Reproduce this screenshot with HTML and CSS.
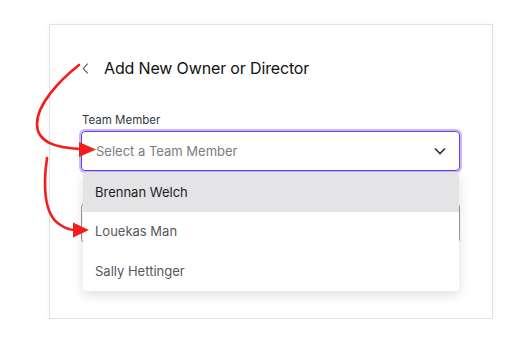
FILE: index.html
```html
<!DOCTYPE html>
<html lang="en">
<head>
  <meta charset="UTF-8">
  <meta name="viewport" content="width=device-width, initial-scale=1.0">
  <title>Add New Owner or Director</title>
  <link rel="stylesheet" href="styles.css">
</head>
<body>

  <div class="card">
    <div class="card-header">
      <button class="back-btn" type="button" aria-label="Back">
        <svg width="8" height="13" viewBox="0 0 8 13"><path d="M6.5 1 L1.5 6.5 L6.5 12" fill="none" stroke="#555" stroke-width="1.2"/></svg>
      </button>
      <h1>Add New Owner or Director</h1>
    </div>

    <div class="field">
      <label class="field-label">Team Member</label>
      <div class="select select-open">
        <span class="placeholder">Select a Team Member</span>
        <svg class="caret" width="12" height="8" viewBox="0 0 12 8"><path d="M1 1.5 L6 6.5 L11 1.5" fill="none" stroke="#333" stroke-width="1.6"/></svg>
      </div>
      <ul class="dropdown">
        <li class="option option-active">Brennan Welch</li>
        <li class="option">Louekas Man</li>
        <li class="option">Sally Hettinger</li>
      </ul>
    </div>

    <div class="select select-behind"></div>
  </div>

  <!-- annotation arrows -->
  <svg class="annotations" width="532" height="339" viewBox="0 0 532 339">
    <path d="M79 65 C60 80 37 104 37 124 C37 142 55 148 81 149" fill="none" stroke="#f21d1d" stroke-width="2.6" stroke-linecap="round"/>
    <polygon points="79,142 96,149.5 79,157" fill="#f21d1d"/>
    <path d="M47 158 C43 185 44 214 59 224 C66 229 71 230 75 230" fill="none" stroke="#f21d1d" stroke-width="2.6" stroke-linecap="round"/>
    <polygon points="73,222.5 89,230 73,237.5" fill="#f21d1d"/>
  </svg>

</body>
</html>
```

FILE: styles.css
```css
body {
  margin: 0;
  background: #fff;
  font-family: Inter, "Noto Sans", sans-serif;
  color: #1a1a1a;
}

.card {
  margin: 24px 0 0 49px;
  width: 444px;
  height: 295px;
  box-sizing: border-box;
  border: 1px solid #e2e2e2;
  box-shadow: 0 0 6px rgba(0, 0, 0, 0.04);
  padding: 0 32px 0 31px;
}

.card-header {
  display: flex;
  align-items: center;
  gap: 15px;
  margin-top: 33px;
  height: 20px;
}

.back-btn {
  border: none;
  background: none;
  padding: 0 0 0 1px;
  width: 8px;
  display: flex;
  align-items: center;
}

.card-header h1 {
  margin: 0;
  font-size: 16px;
  font-weight: 400;
  letter-spacing: -0.15px;
  color: #111;
}

.field {
  position: relative;
  margin-top: 34px;
}

.field-label {
  display: block;
  font-size: 11.5px;
  line-height: 16px;
  color: #333a44;
  margin: 0 0 3px 1px;
}

.select {
  height: 40px;
  box-sizing: border-box;
  border-radius: 4px;
  display: flex;
  align-items: center;
  justify-content: space-between;
  padding: 0 13px 0 14px;
}

.select-open {
  border: 1.5px solid #6b3fe4;
  box-shadow: 0 0 0 2px #cbb7fd;
}

.placeholder {
  font-size: 13px;
  color: #7c7c80;
}

.dropdown {
  position: absolute;
  top: 60px;
  left: 2px;
  right: 1px;
  list-style: none;
  margin: 0;
  padding: 0;
  background: #fff;
  border-radius: 4px;
  box-shadow: 0 4px 12px rgba(0, 0, 0, 0.13);
  z-index: 2;
  overflow: hidden;
}

.option {
  height: 39.5px;
  display: flex;
  align-items: center;
  padding-left: 12px;
  font-size: 13px;
  color: #58585c;
}

.option-active {
  background: #e4e4e6;
  color: #1c1c1e;
}

.select-behind {
  margin-top: 32px;
  border: 1px solid #9a9a9a;
}

.annotations {
  position: absolute;
  top: 0;
  left: 0;
  pointer-events: none;
  z-index: 5;
}
```
